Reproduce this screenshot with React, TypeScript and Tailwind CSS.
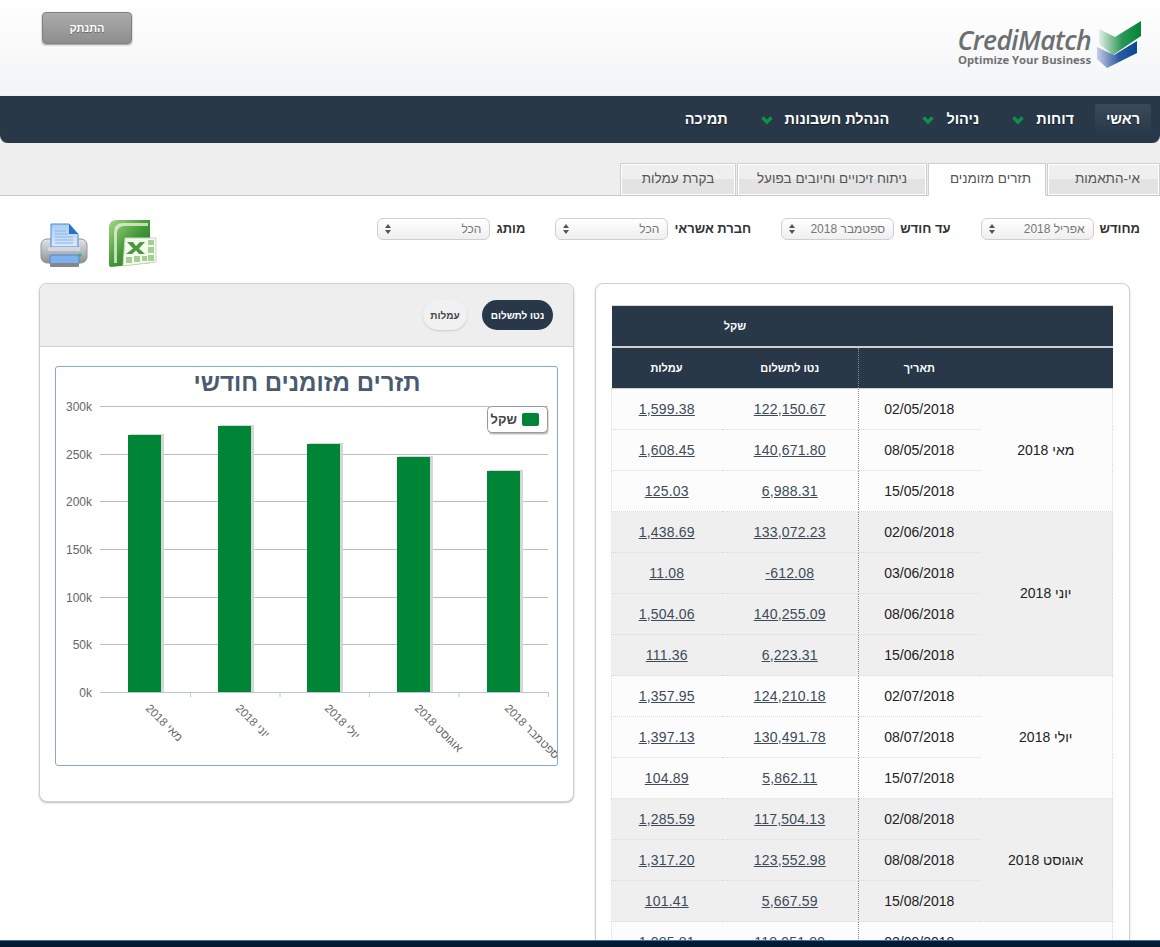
import { useId } from "react";

interface DayRow {
  date: string;
  net: string;
  fee: string;
}
interface MonthGroup {
  label: string;
  shaded: boolean;
  days: DayRow[];
}

const months: MonthGroup[] = [
  {
    label: "מאי 2018",
    shaded: false,
    days: [
      { date: "02/05/2018", net: "122,150.67", fee: "1,599.38" },
      { date: "08/05/2018", net: "140,671.80", fee: "1,608.45" },
      { date: "15/05/2018", net: "6,988.31", fee: "125.03" },
    ],
  },
  {
    label: "יוני 2018",
    shaded: true,
    days: [
      { date: "02/06/2018", net: "133,072.23", fee: "1,438.69" },
      { date: "03/06/2018", net: "-612.08", fee: "11.08" },
      { date: "08/06/2018", net: "140,255.09", fee: "1,504.06" },
      { date: "15/06/2018", net: "6,223.31", fee: "111.36" },
    ],
  },
  {
    label: "יולי 2018",
    shaded: false,
    days: [
      { date: "02/07/2018", net: "124,210.18", fee: "1,357.95" },
      { date: "08/07/2018", net: "130,491.78", fee: "1,397.13" },
      { date: "15/07/2018", net: "5,862.11", fee: "104.89" },
    ],
  },
  {
    label: "אוגוסט 2018",
    shaded: true,
    days: [
      { date: "02/08/2018", net: "117,504.13", fee: "1,285.59" },
      { date: "08/08/2018", net: "123,552.98", fee: "1,317.20" },
      { date: "15/08/2018", net: "5,667.59", fee: "101.41" },
    ],
  },
  {
    label: "ספטמבר 2018",
    shaded: false,
    days: [
      { date: "02/09/2018", net: "118,951.89", fee: "1,085.81" },
      { date: "08/09/2018", net: "120,310.42", fee: "1,240.17" },
      { date: "15/09/2018", net: "5,120.76", fee: "96.52" },
    ],
  },
];

const navItems = [
  { label: "ראשי", active: true, menu: false },
  { label: "דוחות", active: false, menu: true },
  { label: "ניהול", active: false, menu: true },
  { label: "הנהלת חשבונות", active: false, menu: true },
  { label: "תמיכה", active: false, menu: false },
];

const filters = [
  { label: "מחודש", value: "אפריל 2018" },
  { label: "עד חודש", value: "ספטמבר 2018" },
  { label: "חברת אשראי", value: "הכל" },
  { label: "מותג", value: "הכל" },
];

const bars = [
  { x: 128, top: 435, label: "מאי 2018" },
  { x: 218, top: 426, label: "יוני 2018" },
  { x: 307, top: 444, label: "יולי 2018" },
  { x: 397, top: 457, label: "אוגוסט 2018" },
  { x: 487, top: 471, label: "ספטמבר 2018" },
];

const gridLines = [
  { y: 406, label: "300k" },
  { y: 454, label: "250k" },
  { y: 501, label: "200k" },
  { y: 549, label: "150k" },
  { y: 597, label: "100k" },
  { y: 644, label: "50k" },
  { y: 692, label: "0k" },
];

function Logo() {
  const id = useId();
  return (
    <div className="flex items-start gap-[5px]" dir="ltr">
      <div className="flex flex-col items-end pt-[7px]">
        <span className="text-[26.5px] leading-[25px] font-semibold italic tracking-[-0.6px] text-[#6c6f72] font-['Open_Sans',sans-serif]">
          CrediMatch
        </span>
        <span className="text-[11.3px] leading-[14px] font-bold text-[#6f7275] font-['Open_Sans',sans-serif]">
          Optimize Your Business
        </span>
      </div>
      <svg width="46" height="54" viewBox="1097 21 46 54">
        <defs>
          <linearGradient id={`${id}g`} x1="0" x2="1" y1="0" y2="0">
            <stop offset="0" stopColor="#e3eee6" />
            <stop offset="0.55" stopColor="#2a9654" />
            <stop offset="1" stopColor="#008537" />
          </linearGradient>
          <linearGradient id={`${id}b`} x1="0" x2="1" y1="0" y2="0">
            <stop offset="0" stopColor="#c9cee6" />
            <stop offset="0.55" stopColor="#2b5aa3" />
            <stop offset="1" stopColor="#064a94" />
          </linearGradient>
        </defs>
        <polygon points="1100,29 1116,37 1142,21 1142,36 1114,55 1100,44" fill={`url(#${id}g)`} />
        <polygon points="1098,47 1115,55 1138,41 1138,53 1108,68 1098,59" fill={`url(#${id}b)`} />
      </svg>
    </div>
  );
}

function Chevron() {
  return (
    <svg width="12" height="9" viewBox="0 0 12 9" className="block">
      <path d="M1.5 1.5 L6 6 L10.5 1.5" fill="none" stroke="#0b9447" strokeWidth="3.4" />
    </svg>
  );
}

function FakeSelect({ value }: { value: string }) {
  return (
    <div className="flex h-[22px] w-[113px] items-center justify-between rounded-md border border-[#cfcfcf] bg-linear-to-b from-white to-[#efefef] pr-[8px] pl-[6px] text-[12px] font-normal text-[#777]">
      <span>{value}</span>
      <svg width="8" height="12" viewBox="0 0 8 12">
        <path d="M4 1 L7 5 L1 5 Z M4 11 L7 7 L1 7 Z" fill="#555" />
      </svg>
    </div>
  );
}

function PrinterIcon() {
  const id = useId();
  return (
    <svg width="48" height="46" viewBox="0 0 48 46" className="block">
      <defs>
        <linearGradient id={`${id}body`} x1="0" x2="0" y1="0" y2="1">
          <stop offset="0" stopColor="#e4e6e8" />
          <stop offset="1" stopColor="#8b9095" />
        </linearGradient>
        <linearGradient id={`${id}paper`} x1="0" x2="0" y1="0" y2="1">
          <stop offset="0" stopColor="#a9cdf5" />
          <stop offset="1" stopColor="#dbeafb" />
        </linearGradient>
      </defs>
      <rect x="1" y="17" width="46" height="24" rx="6" fill={`url(#${id}body)`} stroke="#8f9499" />
      <path d="M11 2 H29 L38 12 V25 H11 Z" fill={`url(#${id}paper)`} stroke="#4d87d6" />
      <path d="M29 2 L38 12 H29 Z" fill="#2a6fd0" />
      <path d="M15 9 H26 M15 12 H28 M15 15 H33 M15 18 H33 M15 21 H33" stroke="#8fb3dc" />
      <rect x="8" y="25" width="32" height="4" fill="#d5d8db" />
      <rect x="10" y="33" width="29" height="9" rx="1" fill="#7fb0ec" stroke="#4d87d6" />
      <rect x="10" y="41" width="29" height="4" rx="1" fill="#83888d" />
      <circle cx="40" cy="33" r="1.5" fill="#1cc35a" />
    </svg>
  );
}

function ExcelIcon() {
  const id = useId();
  return (
    <svg width="48" height="49" viewBox="0 0 48 49" className="block">
      <defs>
        <linearGradient id={`${id}g`} x1="0" x2="1" y1="0" y2="1">
          <stop offset="0" stopColor="#a6d681" />
          <stop offset="0.5" stopColor="#43983a" />
          <stop offset="1" stopColor="#1c6b1f" />
        </linearGradient>
      </defs>
      <path d="M8 1 H41 V44 L2 48 Q0 48 0 45 V9 Q0 1 8 1 Z" fill={`url(#${id}g)`} />
      <path d="M14 4 H39 V7 H16 Q8 7 8 15 V44 H5 V13 Q5 4 14 4 Z" fill="#eaf6df" opacity="0.75" />
      <path d="M16 19 H47 V43 L14 47 Z" fill="#f4f8ef" stroke="#c7d7bd" />
      <rect x="39" y="21" width="6" height="5" fill="#a4cf93" />
      <rect x="39" y="28" width="6" height="6" fill="#a4cf93" />
      <rect x="39" y="36" width="6" height="6" fill="#a4cf93" />
      <rect x="17" y="38" width="6" height="6" fill="#a4cf93" />
      <rect x="25" y="37" width="6" height="6" fill="#a4cf93" />
      <rect x="33" y="37" width="5" height="5" fill="#a4cf93" />
      <path d="M18 23 H24 L27 27 L31 23 H36 L30 29.5 L36 35 H30 L27 31.5 L23 35 H17 L24 29.5 Z" fill="#4a9a3e" />
    </svg>
  );
}

function MonthlyChart() {
  return (
    <svg width="501" height="398" viewBox="56 367 501 398" className="block font-['Liberation_Sans',sans-serif]">
      <text x="307" y="391" textAnchor="middle" direction="rtl" fontSize="24" fontWeight="700" fill="#4a5b70">
        תזרים מזומנים חודשי
      </text>
      {gridLines.map((line) => (
        <g key={line.label}>
          {line.y !== 692 && <line x1="100" x2="548" y1={line.y + 0.5} y2={line.y + 0.5} stroke="#bdbdbd" />}
          <text x="92" y={line.y + 5} textAnchor="end" fontSize="12" fill="#666" direction="ltr">
            {line.label}
          </text>
        </g>
      ))}
      {bars.map((bar) => (
        <g key={bar.label}>
          <rect x={bar.x + 2} y={bar.top - 1} width="34" height={692 - bar.top + 1} fill="#d6d6d6" />
          <rect x={bar.x} y={bar.top} width="33" height={692 - bar.top} fill="#008537" />
          <text
            x={bar.x + 17}
            y="709"
            transform={`rotate(45 ${bar.x + 17} 709)`}
            textAnchor="end"
            direction="rtl"
            fontSize="11.5"
            fill="#666"
          >
            {bar.label}
          </text>
        </g>
      ))}
      <path
        d="M100 692.5 H548.5 M190.5 692 V697 M280 692 V697 M369.5 692 V697 M459 692 V697 M548.5 692 V697"
        fill="none"
        stroke="#b6c7d9"
      />
      <rect x="487.5" y="406.5" width="60" height="27" rx="4" fill="#000" opacity="0.25" transform="translate(1 1)" />
      <rect x="487.5" y="406.5" width="60" height="26" rx="4" fill="#fff" stroke="#999" />
      <rect x="522" y="413" width="17" height="13" rx="2" fill="#008537" />
      <text x="517" y="424" textAnchor="start" direction="rtl" fontSize="13" fontWeight="700" fill="#444">
        שקל
      </text>
    </svg>
  );
}

function CashflowTable() {
  return (
    <table className="w-[501px] table-fixed border-collapse text-center text-[14px] text-[#222]">
      <colgroup>
        <col className="w-[133px]" />
        <col className="w-[121px]" />
        <col className="w-[137px]" />
        <col className="w-[110px]" />
      </colgroup>
      <thead className="bg-[#283849] text-[11px] font-bold text-white">
        <tr className="h-[41px] border-t border-b-2 border-t-[#d8d8d8] border-b-[#cfcfcf]">
          <th colSpan={2}></th>
          <th colSpan={2}>שקל</th>
        </tr>
        <tr className="h-[42px] border-b border-[#cfcfcf]">
          <th></th>
          <th className="border-l border-dotted border-l-[#8a8a8a]">תאריך</th>
          <th>נטו לתשלום</th>
          <th>עמלות</th>
        </tr>
      </thead>
      <tbody>
        {months.map((month) =>
          month.days.map((day, i) => (
            <tr key={day.date} className={`h-[41px] ${month.shaded ? "bg-[#efefef]" : "bg-[#fcfcfc]"}`}>
              {i === 0 && (
                <td
                  rowSpan={month.days.length}
                  className="border-r border-b border-dotted border-[#d9d9d9]"
                >
                  {month.label}
                </td>
              )}
              <td className="border-b border-l border-dotted border-b-[#d9d9d9] border-l-[#8a8a8a]">{day.date}</td>
              <td className="border-b border-dotted border-[#d9d9d9]">
                <a href="#" dir="ltr" className="tracking-[0.2px] text-[#3d4a59] underline">{day.net}</a>
              </td>
              <td className="border-b border-l border-dotted border-[#d9d9d9]">
                <a href="#" dir="ltr" className="tracking-[0.2px] text-[#3d4a59] underline">{day.fee}</a>
              </td>
            </tr>
          )),
        )}
      </tbody>
    </table>
  );
}

export default function App() {
  const tabs = [
    { label: "אי-התאמות", width: "w-[113px] pl-[8px]", active: false },
    { label: "תזרים מזומנים", width: "w-[118px] pl-[7px]", active: true },
    { label: "ניתוח זיכויים וחיובים בפועל", width: "w-[190px]", active: false },
    { label: "בקרת עמלות", width: "w-[116px]", active: false },
  ];

  return (
    <div dir="rtl" className="flex h-[947px] w-[1160px] flex-col overflow-hidden bg-white font-['Liberation_Sans',sans-serif]">
      <header className="flex h-[96px] shrink-0 items-start justify-between bg-linear-to-b from-white to-[#f3f4f5] pr-[18px] pl-[42px]">
        <div className="pt-[21px]">
          <Logo />
        </div>
        <button className="mt-[12px] h-[32px] w-[90px] rounded-[4px] border border-[#7f7f7f] bg-linear-to-b from-[#ababab] to-[#8e8e8e] text-[11px] font-bold text-white shadow-[0_1px_2px_rgba(0,0,0,0.4)] [text-shadow:0_1px_1px_rgba(0,0,0,0.35)]">
          התנתק
        </button>
      </header>

      <nav className="flex h-[47px] shrink-0 items-start gap-[33px] rounded-b-lg bg-[#283849] pr-[9px] shadow-[0_1px_2px_rgba(0,0,0,0.3)]">
        {navItems.map((item) => (
          <div key={item.label} className={`flex items-center gap-[12px] ${item.active ? "-ml-[12px]" : ""}`}>
            <a
              href="#"
              className={`mt-[8px] flex h-[31px] items-center text-[14.5px] font-bold text-white [text-shadow:0_1px_1px_rgba(0,0,0,0.5)] ${
                item.active ? "rounded-t-[3px] bg-linear-to-b from-[#3a4a5b] to-[#283849] px-[11px]" : ""
              }`}
            >
              {item.label}
            </a>
            {item.menu && (
              <span className="mt-[9px]">
                <Chevron />
              </span>
            )}
          </div>
        ))}
      </nav>

      <div className="flex h-[53px] shrink-0 items-end border-b border-[#c8c8c8] bg-[#eeeeee]">
        <div className="flex gap-px">
          {tabs.map((tab) => (
            <a
              key={tab.label}
              href="#"
              className={`-mb-px flex h-[33px] items-center justify-center border border-[#cfcfcf] text-[13.5px] text-[#555] ${tab.width} ${
                tab.active
                  ? "border-b-white bg-white"
                  : "border-b-[#c8c8c8] bg-[linear-gradient(#efefef_50%,#e3e3e3_50%)] shadow-[inset_0_0_0_1px_#fff]"
              }`}
            >
              {tab.label}
            </a>
          ))}
        </div>
      </div>

      <div className="flex h-[87px] shrink-0 items-start pt-[22px] pr-[20px] pl-[40px]">
        <div className="flex gap-[30px]">
          {filters.map((filter) => (
            <label key={filter.label} className="flex items-center gap-[6px] text-[13px] font-bold text-[#333]">
              {filter.label}
              <FakeSelect value={filter.value} />
            </label>
          ))}
        </div>
        <div className="mt-[1px] mr-auto flex flex-row-reverse items-start gap-[21px]">
          <div className="mt-[3px]">
            <PrinterIcon />
          </div>
          <ExcelIcon />
        </div>
      </div>

      <main className="flex min-h-0 flex-1 items-start gap-[21px] pr-[30px] pl-[39px]">
        <section className="h-[700px] w-[535px] shrink-0 rounded-lg border border-[#cfcfcf] bg-white pt-[21px] pr-[16px] pl-[17px] shadow-[0_1px_2px_rgba(0,0,0,0.2)]">
          <CashflowTable />
        </section>

        <section className="w-[535px] shrink-0 rounded-lg border border-[#cfcfcf] bg-white shadow-[0_1px_2px_rgba(0,0,0,0.25)]">
          <div className="flex h-[63px] items-center gap-[15px] rounded-t-lg border-b border-[#cfcfcf] bg-[#eeeeee] pr-[20px]">
            <button className="h-[30px] w-[71px] rounded-full bg-[#283849] text-[10px] font-bold text-white">
              נטו לתשלום
            </button>
            <button className="h-[30px] w-[44px] rounded-full bg-[#f1f1f1] text-[10px] font-bold text-[#444] shadow-[0_1px_2px_rgba(0,0,0,0.15)]">
              עמלות
            </button>
          </div>
          <div className="px-[15px] pt-[19px] pb-[35px]">
            <div className="h-[400px] rounded-[3px] border border-[#8aa8c8]">
              <MonthlyChart />
            </div>
          </div>
        </section>
      </main>

      <footer className="h-[7px] shrink-0 border-t border-[#2f6fb3] bg-[#031a30]" />
    </div>
  );
}
